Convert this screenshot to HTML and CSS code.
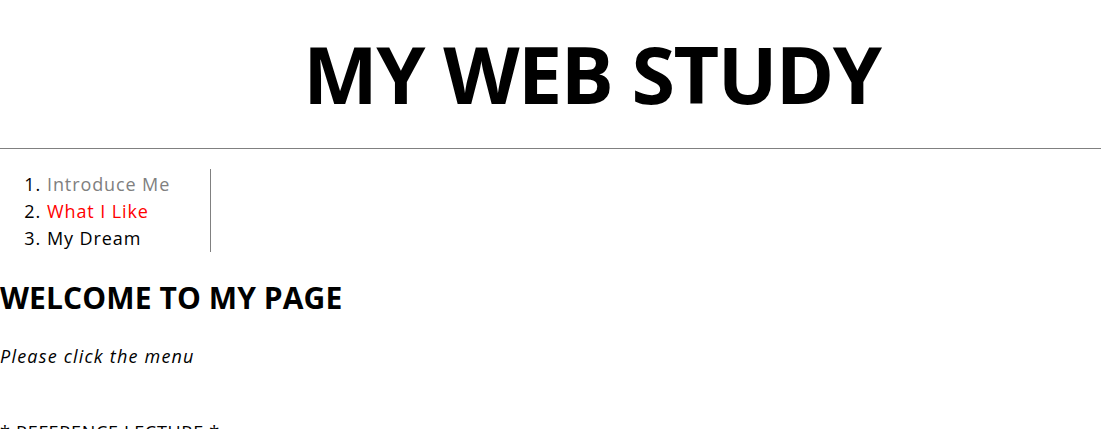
FILE: index.html
```html
<!DOCTYPE html>
<html lang="ko">
<head>
<meta charset="utf-8">
<title>MY WEB STUDY</title>
<link rel="stylesheet" href="styles.css">
</head>
<body>
<header class="site-header">
  <h1 class="title">MY WEB STUDY</h1>
</header>
<nav class="menu">
  <ol class="menu-list">
    <li><a class="menu-link visited" href="#">Introduce Me</a></li>
    <li><a class="menu-link active" href="#">What I Like</a></li>
    <li><a class="menu-link" href="#">My Dream</a></li>
  </ol>
</nav>
<main class="content">
  <h2 class="welcome">WELCOME TO MY PAGE</h2>
  <p class="hint">Please click the menu</p>
  <p class="ref">* REFERENCE LECTURE *</p>
</main>
</body>
</html>
```
FILE: styles.css
```css
html, body {
  margin: 0;
  padding: 0;
  background: #fff;
  color: #000;
  font-family: "Open Sans", "Noto Sans CJK KR", sans-serif;
}
.site-header {
  border-bottom: 1px solid #808080;
  padding: 21px 0 21px 83px;
  text-align: center;
}
.title {
  margin: 0;
  font-size: 79px;
  line-height: 106px;
  font-weight: 700;
  letter-spacing: -1.5px;
}
.menu {
  width: 210px;
  margin-top: 20px;
  border-right: 1px solid #808080;
}
.menu-list {
  margin: 0;
  padding: 2px 0 0 47px;
  font-size: 18px;
  line-height: 27px;
}
.menu-list li::marker {
  letter-spacing: 1px;
}
.menu-link {
  color: #000;
  text-decoration: none;
  letter-spacing: 0.9px;
}
.menu-link.visited { color: #808080; }
.menu-link.active { color: #ff0000; }
.content {
  margin-top: 28px;
}
.welcome {
  margin: 0;
  font-size: 30px;
  line-height: 36px;
  font-weight: 700;
  letter-spacing: 0.1px;
}
.hint {
  margin: 27px 0 0;
  font-size: 18px;
  line-height: 27px;
  font-style: italic;
  letter-spacing: 1.2px;
}
.ref {
  margin: 49px 0 0;
  font-size: 18px;
  line-height: 27px;
  letter-spacing: 0.7px;
}
```
